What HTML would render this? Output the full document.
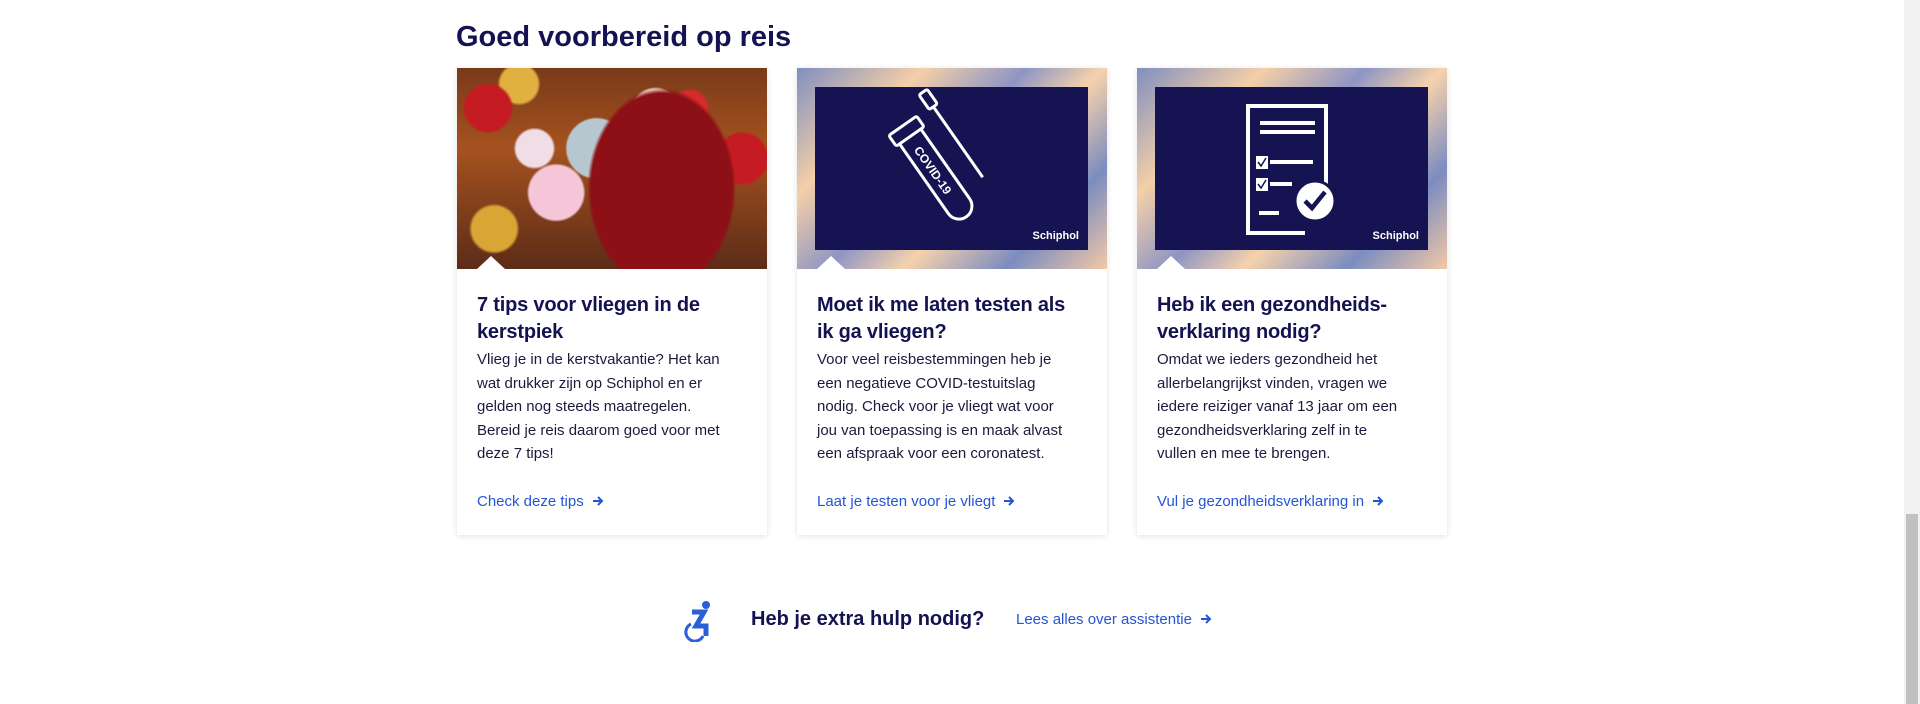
<!DOCTYPE html>
<html><head><meta charset="utf-8"><style>
*{margin:0;padding:0;box-sizing:border-box}
body{width:1920px;height:704px;background:#fff;font-family:"Liberation Sans",sans-serif;position:relative;overflow:hidden}
h2{position:absolute;left:456px;top:21px;font-size:29px;font-weight:bold;color:#141251;letter-spacing:0px}
.card{position:absolute;top:68px;width:310px;height:467px;background:#fff;box-shadow:0 1px 6px rgba(0,0,0,.12)}
.img{position:relative;height:201px;overflow:hidden}
.pat{background:
linear-gradient(135deg,#7f8fc0 0%,#f4cfa8 25%,#8e95c4 45%,#f6d2ac 60%,#7b8cc0 80%,#f3c9a6 100%)}
.panel{position:absolute;left:18px;top:19px;width:273px;height:163px;background:#161353}
.sch{position:absolute;right:9px;bottom:8px;color:#fff;font-size:11px;font-weight:bold}
.notch{position:absolute;left:20px;bottom:0;width:0;height:0;border-left:14px solid transparent;border-right:14px solid transparent;border-bottom:13px solid #fff}
.txt{position:absolute;left:20px;top:224px;width:280px}
.t{font-size:20px;font-weight:bold;color:#141251;line-height:27px;white-space:nowrap;letter-spacing:-0.2px}
.b{font-size:15px;color:#1c1a3c;line-height:23.6px;white-space:nowrap;margin-top:2px}
.l{position:absolute;left:20px;top:425px;font-size:15px;color:#2455d6;white-space:nowrap}
.arr{display:inline-block;margin-left:8px;vertical-align:-1px}
</style></head><body>
<h2>Goed voorbereid op reis</h2>

<div class="card" style="left:457px">
 <div class="img" style="background:radial-gradient(circle at 32% 62%,#f4c6d8 0 11%,transparent 12%),radial-gradient(circle at 25% 40%,#f0dde5 0 7%,transparent 8%),radial-gradient(ellipse 24% 50% at 66% 60%,#8d1016 0 95%,transparent 100%),radial-gradient(circle at 64% 22%,#efe6d6 0 9%,transparent 10%),radial-gradient(circle at 10% 20%,#c41c22 0 7%,transparent 8%),radial-gradient(circle at 92% 45%,#c41c22 0 8%,transparent 9%),radial-gradient(circle at 75% 20%,#d82a2a 0 6%,transparent 7%),radial-gradient(circle at 12% 80%,#d9a534 0 7%,transparent 8%),radial-gradient(circle at 20% 8%,#e0b040 0 6%,transparent 7%),radial-gradient(circle at 45% 40%,#b6c7cf 0 14%,transparent 15%),linear-gradient(180deg,#7a3a1a,#a5521e 40%,#5c2c18)">
  <div class="notch"></div>
 </div>
 <div class="txt"><div class="t">7 tips voor vliegen in de<br>kerstpiek</div>
 <div class="b">Vlieg je in de kerstvakantie? Het kan<br>wat drukker zijn op Schiphol en er<br>gelden nog steeds maatregelen.<br>Bereid je reis daarom goed voor met<br>deze 7 tips!</div></div>
 <div class="l">Check deze tips<svg class="arr" width="12" height="12" viewBox="0 0 12 12"><path d="M1 6H10M6 2L10 6L6 10" fill="none" stroke="#2455d6" stroke-width="2"/></svg></div>
</div>

<div class="card" style="left:797px">
 <div class="img pat">
  <div class="panel">
   <svg width="273" height="163" viewBox="0 0 273 163">
    <g transform="rotate(-35 130 80)" fill="none" stroke="#fff" stroke-width="3">
     <rect x="102" y="22" width="34" height="13" rx="2"/>
     <path d="M106 35 V120 A13 13 0 0 0 132 120 V35"/>
     <rect x="150" y="6" width="10" height="18" rx="2"/>
     <path d="M155 24 V110"/>
     <text x="0" y="0" fill="#fff" stroke="none" font-size="12" font-weight="bold" transform="translate(114 48) rotate(90)">COVID-19</text>
    </g>
   </svg>
   <div class="sch">Schiphol</div></div>
  <div class="notch"></div>
 </div>
 <div class="txt"><div class="t">Moet ik me laten testen als<br>ik ga vliegen?</div>
 <div class="b">Voor veel reisbestemmingen heb je<br>een negatieve COVID-testuitslag<br>nodig. Check voor je vliegt wat voor<br>jou van toepassing is en maak alvast<br>een afspraak voor een coronatest.</div></div>
 <div class="l">Laat je testen voor je vliegt<svg class="arr" width="12" height="12" viewBox="0 0 12 12"><path d="M1 6H10M6 2L10 6L6 10" fill="none" stroke="#2455d6" stroke-width="2"/></svg></div>
</div>

<div class="card" style="left:1137px">
 <div class="img pat">
  <div class="panel">
   <svg width="273" height="163" viewBox="0 0 273 163">
    <g fill="none" stroke="#fff" stroke-width="4">
     <path d="M171 100 V19 H93 V146 H150"/>
     <path d="M105 36 H160 M105 45 H160 M115 75 H158 M115 97 H137 M104 126 H124"/>
    </g>
    <rect x="101" y="69" width="12" height="13" fill="#fff"/><rect x="101" y="91" width="12" height="13" fill="#fff"/>
    <path d="M103 75 L106 79 L111 71 M103 97 L106 101 L111 93" fill="none" stroke="#161353" stroke-width="1.5"/>
    <circle cx="160" cy="114" r="20" fill="#fff" stroke="#161353" stroke-width="3"/>
    <path d="M150 114 L157 121 L170 105" fill="none" stroke="#161353" stroke-width="4.5"/>
   </svg>
   <div class="sch">Schiphol</div></div>
  <div class="notch"></div>
 </div>
 <div class="txt"><div class="t">Heb ik een gezondheids-<br>verklaring nodig?</div>
 <div class="b">Omdat we ieders gezondheid het<br>allerbelangrijkst vinden, vragen we<br>iedere reiziger vanaf 13 jaar om een<br>gezondheidsverklaring zelf in te<br>vullen en mee te brengen.</div></div>
 <div class="l">Vul je gezondheidsverklaring in<svg class="arr" width="12" height="12" viewBox="0 0 12 12"><path d="M1 6H10M6 2L10 6L6 10" fill="none" stroke="#2455d6" stroke-width="2"/></svg></div>
</div>

<svg style="position:absolute;left:684px;top:600px" width="30" height="42" viewBox="0 0 30 42">
 <circle cx="22" cy="5" r="4" fill="#2a5fd8"/>
 <path d="M8 12 H20 L12 26 H22 V36" fill="none" stroke="#2a5fd8" stroke-width="5"/>
 <path d="M7 24 A9 9 0 1 0 19 36" fill="none" stroke="#2a5fd8" stroke-width="3"/>
</svg>
<div style="position:absolute;left:751px;top:608px;font-size:20px;font-weight:bold;color:#141251">Heb je extra hulp nodig?</div>
<div style="position:absolute;left:1016px;top:611px;font-size:15px;color:#2455d6">Lees alles over assistentie<svg class="arr" width="12" height="12" viewBox="0 0 12 12"><path d="M1 6H10M6 2L10 6L6 10" fill="none" stroke="#2455d6" stroke-width="2"/></svg></div>

<div style="position:absolute;left:1904px;top:0;width:16px;height:704px;background:#f1f1f1"></div>
<div style="position:absolute;left:1906px;top:514px;width:12px;height:190px;background:#c1c1c1"></div>
</body></html>
